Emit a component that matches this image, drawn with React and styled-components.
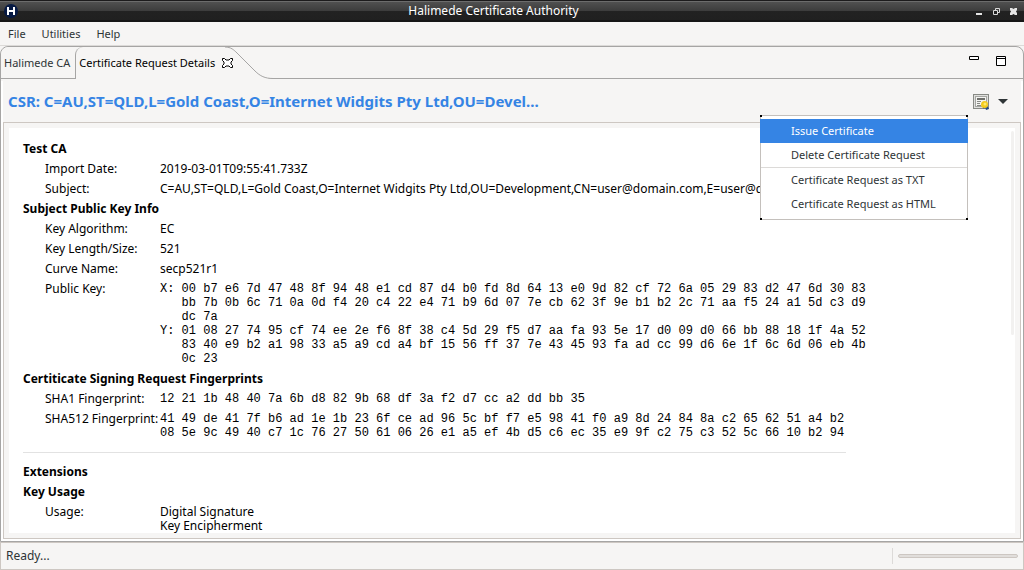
import React from "react";
import styled, { createGlobalStyle } from "styled-components";

const ui = '"Noto Sans", "Open Sans", sans-serif';
const mono = '"Liberation Mono", monospace';

const Global = createGlobalStyle`
  * { box-sizing: border-box; }
  body { margin: 0; background: #f6f5f4; font: 12px/14px ${ui}; color: #000; }
  button { font: inherit; color: inherit; background: none; border: 0; padding: 0; margin: 0; }
  h1, h2, dl, dd, dt { margin: 0; }
  svg { display: block; }
`;

const Window = styled.div`
  display: flex;
  flex-direction: column;
  height: 100vh;
  overflow: hidden;
  background: #f6f5f4;
`;

const TitleBar = styled.header`
  flex: none;
  display: flex;
  align-items: center;
  height: 22px;
  padding: 0 7px 0 3px;
  color: #fff;
  background: linear-gradient(#1c1b1c 0 1px, #6c6c6c 1px 2px, #505050 2px, #3c3c3c 11px, #222 11px, #202020 20px, #161616 20px);
`;

const TitleText = styled.div`
  flex: 1;
  padding-right: 8px;
  text-align: center;
`;

const WindowButtons = styled.div`
  display: flex;
  gap: 10px;
`;

const IconButton = styled.button`
  display: flex;
`;

const MenuBar = styled.nav`
  flex: none;
  display: flex;
  gap: 16px;
  height: 24px;
  align-items: center;
  padding: 0 8px;
  font-size: 11px;
  color: #2e3436;
  border-bottom: 1px solid #dcdad8;
`;

const Part = styled.main`
  flex: 1;
  min-height: 0;
  display: flex;
  flex-direction: column;
  border: 1px solid #a6a5a4;
  border-radius: 8px 8px 0 0;
`;

const TabStrip = styled.div`
  flex: none;
  display: flex;
  height: 32px;
  border-bottom: 1px solid #a6a5a4;
`;

const Tab = styled.div`
  display: flex;
  align-items: center;
  gap: 7px;
  height: ${(p) => (p.$active ? 32 : 31)}px;
  padding: 0 ${(p) => (p.$active ? 3 : 5)}px 0 3px;
  font-size: 11px;
  white-space: nowrap;
  color: ${(p) => (p.$active ? "#000" : "#2e3436")};
  background: #f6f5f4;
  border-radius: 8px 0 0 0;
  border-left: ${(p) => (p.$active ? "1px solid #a6a5a4" : "0")};
`;

const TabCurve = styled.svg`
  flex: none;
  width: 48px;
  height: 32px;
  margin-left: -11px;
`;

const PaneButtons = styled.div`
  display: flex;
  align-items: flex-start;
  gap: 17px;
  margin-left: auto;
  padding: 9px 17px 0 0;
`;

const Content = styled.section`
  flex: 1;
  min-height: 0;
  display: flex;
  flex-direction: column;
  margin-top: 2px;
  border: 2px solid #fff;
  border-top: 0;
`;

const Heading = styled.div`
  position: relative;
  flex: none;
  display: flex;
  align-items: center;
  justify-content: space-between;
  height: 41px;
  padding: 0 13px 0 5px;
`;

const Title = styled.h1`
  padding-bottom: 1px;
  font-size: 15px;
  line-height: 18px;
  color: #3584e4;
`;

const Tools = styled.div`
  display: flex;
  align-items: center;
  gap: 9px;
`;

const Menu = styled.div`
  position: absolute;
  z-index: 2;
  top: 34px;
  right: 53px;
  width: 208px;
  padding: 3px 0;
  font-size: 11px;
  color: #2e3436;
  background: #fff;
  border: 1px solid #c4c0bc;

  &::before, &::after {
    content: "";
    position: absolute;
    left: -1px;
    right: -1px;
    height: 2px;
    background: linear-gradient(90deg, #000 2px, transparent 2px calc(100% - 2px), #000 calc(100% - 2px));
  }
  &::before { top: -1px; }
  &::after { bottom: -1px; }
`;

const MenuItem = styled.button`
  display: block;
  width: calc(100% + 2px);
  height: 24px;
  margin: 0 -1px;
  padding: 0 31px;
  text-align: left;
  white-space: nowrap;
  color: ${(p) => (p.$active ? "#fff" : "inherit")};
  background: ${(p) => (p.$active ? "#3584e4" : "none")};
`;

const MenuRule = styled.hr`
  margin: 0;
  border: 0;
  border-top: 1px solid #dcdad8;
`;

const Frame = styled.div`
  flex: 1;
  min-height: 0;
  display: flex;
  padding: 5px;
  border: 1px solid #cdc7c2;
`;

const Sheet = styled.article`
  flex: 1;
  min-width: 0;
  display: flex;
  overflow: hidden;
  background: #fff;
`;

const Details = styled.div`
  flex: 1;
  min-width: 0;
  padding: 14px 0 0 14px;
`;

const Scrollbar = styled.div`
  width: 3px;
  height: 204px;
  margin: 3px 1px 0 0;
  border-radius: 2px;
  background: #f2f1f0;
`;

const Section = styled.h2`
  margin-bottom: 6px;
  font: bold 12px/14px ${ui};
`;

const Fields = styled.dl`
  display: grid;
  grid-template-columns: 115px 1fr;
  row-gap: 6px;
  margin-bottom: 6px;
  padding-left: 22px;
  white-space: pre;
`;

const Code = styled.dd`
  font-family: ${mono};
`;

const Rule = styled.hr`
  max-width: 823px;
  margin: 12px 0;
  border: 0;
  border-top: 1px solid #e2e2e2;
`;

const StatusBar = styled.footer`
  flex: none;
  display: flex;
  align-items: center;
  height: 28px;
  padding: 0 5px;
  color: #2e3436;
  border: 1px solid #cdc7c2;
`;

const Progress = styled.div`
  width: 126px;
  height: 16px;
  display: flex;
  align-items: center;
  margin-left: auto;
  padding-left: 5px;
  border-left: 1px solid #dcdad8;
`;

const Trough = styled.div`
  flex: 1;
  height: 4px;
  background: #e1dedb;
  border: 1px solid #cdc7c2;
  border-radius: 2px;
`;

const publicKey = `X: 00 b7 e6 7d 47 48 8f 94 48 e1 cd 87 d4 b0 fd 8d 64 13 e0 9d 82 cf 72 6a 05 29 83 d2 47 6d 30 83
   bb 7b 0b 6c 71 0a 0d f4 20 c4 22 e4 71 b9 6d 07 7e cb 62 3f 9e b1 b2 2c 71 aa f5 24 a1 5d c3 d9
   dc 7a
Y: 01 08 27 74 95 cf 74 ee 2e f6 8f 38 c4 5d 29 f5 d7 aa fa 93 5e 17 d0 09 d0 66 bb 88 18 1f 4a 52
   83 40 e9 b2 a1 98 33 a5 a9 cd a4 bf 15 56 ff 37 7e 43 45 93 fa ad cc 99 d6 6e 1f 6c 6d 06 eb 4b
   0c 23`;

const sha512 = `41 49 de 41 7f b6 ad 1e 1b 23 6f ce ad 96 5c bf f7 e5 98 41 f0 a9 8d 24 84 8a c2 65 62 51 a4 b2
08 5e 9c 49 40 c7 1c 76 27 50 61 06 26 e1 a5 ef 4b d5 c6 ec 35 e9 9f c2 75 c3 52 5c 66 10 b2 94`;

function Logo() {
  return (
    <svg width="16" height="16" viewBox="0 0 16 16" aria-hidden="true">
      <circle cx="8" cy="8" r="7" fill="#071a44" />
      <path d="M5 4v8M11 4v8M5 8h6" stroke="#fff" strokeWidth="2" fill="none" />
    </svg>
  );
}

function CertificateIcon() {
  return (
    <svg width="16" height="16" viewBox="0 0 16 16" aria-hidden="true">
      <rect x="0.5" y="0.5" width="15" height="14" fill="#e0e0de" stroke="#888a85" />
      <rect x="2.5" y="2.5" width="11" height="10" fill="#f4f4f2" stroke="#a5a6a2" />
      <path d="M4 5h8" stroke="#6f706c" strokeWidth="2" />
      <path d="M4 7.5h4M4 9.5h3M4 11.5h4" stroke="#888a85" />
      <path d="M9 12l2 3 1-2 1 3 3-1-2-4z" fill="#204a87" />
      <circle cx="11.5" cy="10.5" r="3.5" fill="#f3cb1c" />
      <circle cx="12" cy="10" r="1.5" fill="#fbe870" />
    </svg>
  );
}

export default function App() {
  return (
    <Window>
      <Global />
      <TitleBar>
        <Logo />
        <TitleText>Halimede Certificate Authority</TitleText>
        <WindowButtons>
          <IconButton aria-label="Minimize window">
            <svg width="7" height="7" fill="#e4e4e4"><path d="M0 5h6v2H0z" /></svg>
          </IconButton>
          <IconButton aria-label="Restore window">
            <svg width="7" height="7" fill="none" stroke="#d8d8d8"><path d="M2.5 2V.5h4v4H5M.5 2.5h4v4h-4z" /></svg>
          </IconButton>
          <IconButton aria-label="Close window">
            <svg width="7" height="7" fill="#e4e4e4"><path d="M0 0h2l1.5 1L5 0h2v2L6 3.500 7 5v2H5L3.500 6 2 7H0V5l1-1.500L0 2z" /></svg>
          </IconButton>
        </WindowButtons>
      </TitleBar>
      <MenuBar>
        <button>File</button>
        <button>Utilities</button>
        <button>Help</button>
      </MenuBar>
      <Part>
        <TabStrip>
          <Tab><button>Halimede CA</button></Tab>
          <Tab $active>
            <button>Certificate Request Details</button>
            <IconButton aria-label="Close tab">
              <svg width="11" height="10" fill="#fff" stroke="#000">
                <path d="M.5.5h2l1.500 1.500h3L8.500.5h2v2L9 4v2l1.500 1.500v2h-2L7 8H4L2.500 9.500h-2v-2L2 6V4L.5 2.500z" />
              </svg>
            </IconButton>
          </Tab>
          <TabCurve viewBox="0 0 48 32" aria-hidden="true">
            <path d="M11 5V32H48V31.500C40 31.500 35 29 30 24L12 6z" fill="#f6f5f4" />
            <path d="M0 0C6 0 9 3 12 6L30 24C35 29 40 31.500 48 31.500" fill="none" stroke="#a6a5a4" />
          </TabCurve>
          <PaneButtons>
            <IconButton aria-label="Minimize pane">
              <svg width="10" height="4" fill="#fff" stroke="#000"><path d="M.5.5h9v3h-9z" /></svg>
            </IconButton>
            <IconButton aria-label="Maximize pane">
              <svg width="10" height="10" fill="#fff" stroke="#000"><path d="M.5.5h9v9h-9zM.5 2.500h9" /></svg>
            </IconButton>
          </PaneButtons>
        </TabStrip>
        <Content>
          <Heading>
            <Title>CSR: C=AU,ST=QLD,L=Gold Coast,O=Internet Widgits Pty Ltd,OU=Devel...</Title>
            <Tools>
              <IconButton aria-label="Certificate actions"><CertificateIcon /></IconButton>
              <IconButton aria-label="Open menu">
                <svg width="10" height="5" fill="#2e3436"><path d="M0 0h10L5 5z" /></svg>
              </IconButton>
            </Tools>
            <Menu>
              <MenuItem $active>Issue Certificate</MenuItem>
              <MenuItem>Delete Certificate Request</MenuItem>
              <MenuRule />
              <MenuItem>Certificate Request as TXT</MenuItem>
              <MenuItem>Certificate Request as HTML</MenuItem>
            </Menu>
          </Heading>
          <Frame>
            <Sheet>
              <Details>
                <Section>Test CA</Section>
                <Fields>
                  <dt>Import Date:</dt><dd>2019-03-01T09:55:41.733Z</dd>
                  <dt>Subject:</dt><dd>C=AU,ST=QLD,L=Gold Coast,O=Internet Widgits Pty Ltd,OU=Development,CN=user@domain.com,E=user@domain.com</dd>
                </Fields>
                <Section>Subject Public Key Info</Section>
                <Fields>
                  <dt>Key Algorithm:</dt><dd>EC</dd>
                  <dt>Key Length/Size:</dt><dd>521</dd>
                  <dt>Curve Name:</dt><dd>secp521r1</dd>
                  <dt>Public Key:</dt><Code>{publicKey}</Code>
                </Fields>
                <Section>Certiticate Signing Request Fingerprints</Section>
                <Fields>
                  <dt>SHA1 Fingerprint:</dt><Code>12 21 1b 48 40 7a 6b d8 82 9b 68 df 3a f2 d7 cc a2 dd bb 35</Code>
                  <dt>SHA512 Fingerprint:</dt><Code>{sha512}</Code>
                </Fields>
                <Rule />
                <Section>Extensions</Section>
                <Section>Key Usage</Section>
                <Fields>
                  <dt>Usage:</dt><dd>{"Digital Signature\nKey Encipherment"}</dd>
                </Fields>
              </Details>
              <Scrollbar />
            </Sheet>
          </Frame>
        </Content>
      </Part>
      <StatusBar>Ready...<Progress><Trough /></Progress></StatusBar>
    </Window>
  );
}
